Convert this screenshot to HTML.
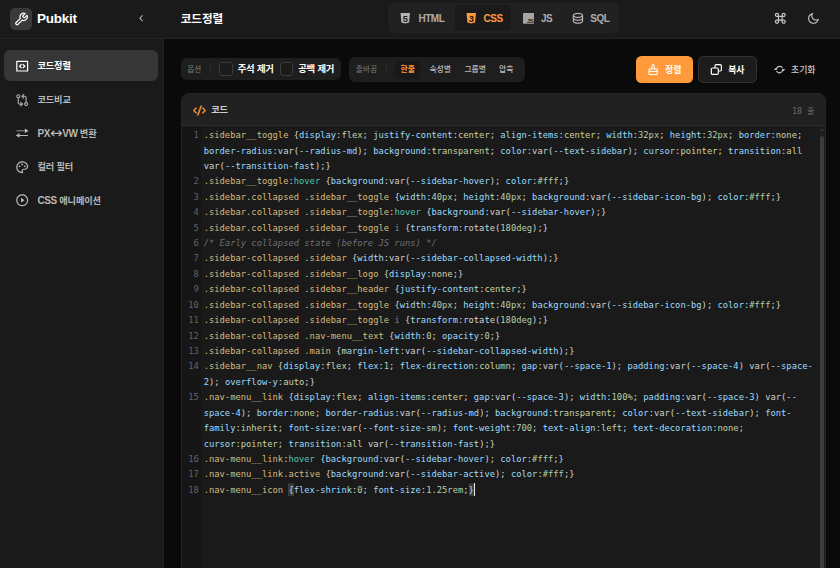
<!DOCTYPE html>
<html lang="ko">
<head>
<meta charset="utf-8">
<title>Pubkit - 코드정렬</title>
<style>
*{box-sizing:border-box;margin:0;padding:0}
html,body{width:840px;height:568px;overflow:hidden;background:#0a0a0a}
body{font-family:"Liberation Sans","Noto Sans CJK KR",sans-serif;color:#fff;position:relative;-webkit-font-smoothing:antialiased}
.abs{position:absolute}
/* sidebar */
.sidebar{position:absolute;left:0;top:0;width:164px;height:568px;background:#1a1a1a}
.sb-head{position:absolute;left:0;top:0;width:164px;height:39px;border-bottom:1px solid #242424}
.logo-box{position:absolute;left:10px;top:8px;width:22px;height:22px;border-radius:5px;background:#3a3a3a}
.logo-txt{position:absolute;left:37px;top:9px;font-size:13.5px;font-weight:700;line-height:20px;letter-spacing:-0.25px;color:#fff}
.collapse{position:absolute;left:136px;top:12px;width:12px;height:14px}
.nav{position:absolute;left:4px;width:154px;height:31px;border-radius:6px}
.nav.active{background:#363636}
.nav svg{position:absolute;left:10.8px;top:9px;width:14.4px;height:14.4px}
.nav span{position:absolute;left:33.5px;top:0;line-height:33px;font-size:9.2px;font-weight:700;color:#b8b8b8;letter-spacing:-0.15px;white-space:nowrap}
.nav.active span{color:#fff}
/* header */
.header{position:absolute;left:164px;top:0;width:676px;height:39px;background:#1a1a1a;border-bottom:1px solid #242424}
.title{position:absolute;left:16.7px;top:8.7px;font-size:11.6px;font-weight:700;line-height:20px;letter-spacing:-0.05px;color:#fff}
.tabs{position:absolute;left:224px;top:3px;width:231px;height:30px;border-radius:6px;background:#212121}
.tab{position:absolute;top:2px;height:26px;border-radius:4px;font-size:10px;font-weight:700;color:#adadad;line-height:27.6px;letter-spacing:-0.5px}
.tab.on{background:#1a1a1a;color:#ff9a3c}
.tab svg{position:absolute;top:7.5px;height:11px}
.tab span{position:absolute;top:0}
/* toolbar */
.grp{position:absolute;top:58.3px;height:21.4px;border-radius:6px;background:#1e1e1e}
.lbl{position:absolute;top:1.2px;line-height:21.4px;font-size:7.6px;color:#7a7a7a;letter-spacing:0;white-space:nowrap}
.vdiv{position:absolute;top:5px;width:1px;height:11.4px;background:#2a2a2a}
.cb{position:absolute;top:4.2px;width:13.5px;height:13.5px;border:1px solid #3c3c3c;border-radius:3px;background:#1a1a1a}
.cbl{position:absolute;top:0;line-height:21.4px;font-size:9.4px;font-weight:700;color:#fff;letter-spacing:-0.2px;white-space:nowrap}
.seg{position:absolute;top:4.2px;height:17.5px;line-height:18.6px;border-radius:4px;font-size:7.8px;font-weight:500;color:#bcbcbc;text-align:center;letter-spacing:0;white-space:nowrap}
.seg.on{background:#191919;color:#ff9a3c;font-weight:700}
.btn{position:absolute;top:56px;height:26.7px;border-radius:5.5px;font-size:8.9px;font-weight:700;letter-spacing:0;line-height:28.2px;white-space:nowrap}
.btn span{position:absolute;top:0}
.btn svg{position:absolute}
/* card */
.card{position:absolute;left:180.6px;top:93.4px;width:645.9px;height:500px;border-radius:8px;background:#1a1a1a;overflow:hidden;border:1px solid #252525}
.card-head{position:absolute;left:0;top:0;width:646px;height:31.7px;background:#212121;border-bottom:1px solid #2c2c2c}
.card-title{position:absolute;left:29.6px;top:0;line-height:33.4px;font-size:9.2px;font-weight:700;color:#d0d0d0;letter-spacing:-0.15px}
.count{position:absolute;right:13.2px;top:1.6px;line-height:30.4px;font-size:8px;color:#6a6a6a;white-space:nowrap}
.count b{font-family:"DejaVu Sans Mono","Liberation Mono",monospace;font-weight:400;font-size:8.4px}
.gutter{position:absolute;left:0;top:31.7px;width:19.2px;height:470px;background:#161616}
.code{position:absolute;left:0;top:33.7px;width:640px;font-family:"DejaVu Sans Mono","Liberation Mono",monospace;font-size:8.8px;line-height:15.43px;color:#d4d4d4}
.row{position:relative;height:15.43px;padding-left:22.1px;white-space:pre}
.row i.n{position:absolute;left:0;width:17.2px;text-align:right;font-style:normal;color:#636363}
.s{color:#d7ba7d}.p{color:#9cdcfe}.v{color:#c8d3a4}.n{color:#b5cea8}.t{color:#4ec9b0}.c{color:#6f6f6f;font-style:italic}.f{color:#d4d4d4}.e{color:#808080}
.sbar{position:absolute;left:637.6px;top:31.7px;width:8px;height:470px;background:#1d1d1d}
.thumb{position:absolute;left:1.2px;top:9.6px;width:3.7px;height:470px;background:#3b3b3b;border-radius:2px}
.sb-edge{position:absolute;left:163px;top:39px;width:1px;height:529px;background:#1f1f1f}
.ar{font-family:"DejaVu Sans",sans-serif;font-weight:400;font-size:15px;line-height:0;letter-spacing:-0.5px;position:relative;top:0.8px}
.l{font-size:10px;font-weight:700;letter-spacing:-0.4px}
.g2{top:57px;height:24.6px}
.g2 .lbl{line-height:24.6px}
.g2 .vdiv{top:6.6px}
.mb{background:#3c3c3c;box-shadow:0 -1.5px 0 #3c3c3c,0 1px 0 #3c3c3c}
.cur{display:inline-block;width:1px;height:12.6px;background:#e8e8e8;vertical-align:-3px;margin-left:0.3px}
.arr{position:absolute;left:1px;top:2.6px;width:0;height:0;border-left:2.1px solid transparent;border-right:2.1px solid transparent;border-bottom:2.6px solid #3a3a3a}
</style>
</head>
<body>
<div class="sidebar">
  <div class="sb-head">
    <div class="logo-box"></div><svg class="abs" style="left:13.75px;top:11.6px;width:14.5px;height:14.5px" viewBox="0 0 24 24" fill="none" stroke="#fff" stroke-width="2" stroke-linecap="round" stroke-linejoin="round"><path d="M14.7 6.3a1 1 0 0 0 0 1.4l1.6 1.6a1 1 0 0 0 1.4 0l3.77-3.77a6 6 0 0 1-7.94 7.94l-6.91 6.91a2.12 2.12 0 0 1-3-3l6.91-6.91a6 6 0 0 1 7.94-7.94l-3.76 3.76z"/></svg>
    <div class="logo-txt">Pubkit</div>
    <svg class="abs" style="left:135.2px;top:12.2px;width:12.3px;height:12.3px" viewBox="0 0 24 24" fill="#b4b4b4"><path d="M10.8284 12.0007L15.7782 16.9504L14.364 18.3646L8 12.0007L14.364 5.63672L15.7782 7.05093L10.8284 12.0007Z"/></svg>
  </div>
  <div class="sb-edge"></div>
  <div class="nav active" style="top:50px"><svg viewBox="0 0 24 24" fill="#fff"><path d="M3 3H21C21.5523 3 22 3.44772 22 4V20C22 20.5523 21.5523 21 21 21H3C2.44772 21 2 20.5523 2 20V4C2 3.44772 2.44772 3 3 3ZM4 5V19H20V5H4ZM6.2 12L10.2 8L11.700 9.500L9.200 12L11.700 14.500L10.2 16ZM17.800 12L13.800 8L12.300 9.500L14.800 12L12.300 14.500L13.800 16Z"/></svg><span>코드정렬</span></div>
  <div class="nav" style="top:83.5px"><svg viewBox="0 0 24 24" fill="none" stroke="#b0b0b0" stroke-width="1.8" stroke-linecap="round" stroke-linejoin="round"><circle cx="5.5" cy="5.5" r="2.5"/><circle cx="18.5" cy="18.5" r="2.5"/><path d="M12 5.5h4.5a2 2 0 0 1 2 2V16"/><path d="M14.5 8.5l-3-3 3-3"/><path d="M12 18.5H7.500a2 2 0 0 1-2-2V8"/><path d="M9.5 15.500l3 3-3 3"/></svg><span>코드비교</span></div>
  <div class="nav" style="top:117px"><svg viewBox="0 0 24 24" fill="#b8b8b8"><path d="M2.500 7.300H16.500V4L22.600 8.100L16.500 12.200V8.900H2.500ZM21.500 14.900H7.500V11.600L1.400 15.700L7.500 19.800V16.500H21.500Z"/></svg><span><b class="l">PX<b class="ar">↔</b>VW</b> 변환</span></div>
  <div class="nav" style="top:150.5px"><svg viewBox="0 0 24 24" fill="#b8b8b8"><path d="M12 2C17.5222 2 22 5.97778 22 10.8889C22 13.9556 19.5111 16.4444 16.4444 16.4444H14.4778C13.5556 16.4444 12.8111 17.1889 12.8111 18.1111C12.8111 18.5333 12.9778 18.9222 13.2333 19.2111C13.5 19.5111 13.6667 19.9 13.6667 20.3333C13.6667 21.2556 12.9 22 12 22C6.47778 22 2 17.5222 2 12C2 6.47778 6.47778 2 12 2ZM10.8111 18.1111C10.8111 16.0843 12.451 14.4444 14.4778 14.4444H16.4444C18.4065 14.4444 20 12.851 20 10.8889C20 7.1392 16.4677 4 12 4C7.58235 4 4 7.58235 4 12C4 16.19 7.2226 19.6285 11.324 19.9718C10.9948 19.4168 10.8111 18.7761 10.8111 18.1111ZM7.5 12C6.67157 12 6 11.3284 6 10.5C6 9.67157 6.67157 9 7.5 9C8.32843 9 9 9.67157 9 10.5C9 11.3284 8.32843 12 7.5 12ZM16.5 12C15.6716 12 15 11.3284 15 10.5C15 9.67157 15.6716 9 16.5 9C17.3284 9 18 9.67157 18 10.5C18 11.3284 17.3284 12 16.5 12ZM12 9C11.1716 9 10.5 8.32843 10.5 7.5C10.5 6.67157 11.1716 6 12 6C12.8284 6 13.5 6.67157 13.5 7.5C13.5 8.32843 12.8284 9 12 9Z"/></svg><span>컬러 필터</span></div>
  <div class="nav" style="top:184px"><svg viewBox="0 0 24 24" fill="#b8b8b8"><path d="M12 22C6.47715 22 2 17.5228 2 12C2 6.47715 6.47715 2 12 2C17.5228 2 22 6.47715 22 12C22 17.5228 17.5228 22 12 22ZM12 20C16.4183 20 20 16.4183 20 12C20 7.58172 16.4183 4 12 4C7.58172 4 4 7.58172 4 12C4 16.4183 7.58172 20 12 20ZM10.6219 8.41459L15.5008 11.6672C15.6846 11.7897 15.7343 12.0381 15.6117 12.2219C15.5824 12.2658 15.5447 12.3035 15.5008 12.3328L10.6219 15.5854C10.4381 15.708 10.1897 15.6583 10.0672 15.4745C10.0234 15.4088 10 15.3316 10 15.2526V8.74741C10 8.52649 10.1791 8.34741 10.4 8.34741C10.479 8.34741 10.5562 8.37078 10.6219 8.41459Z"/></svg><span><b class="l">CSS</b> 애니메이션</span></div>
</div>
<div class="header">
  <div class="title">코드정렬</div>
  <div class="tabs">
    <div class="tab" style="left:3px;width:64px"><svg class="abs" style="left:8.4px;top:7.1px;width:12.5px;height:12.5px" viewBox="0 0 24 24"><path fill="#b4b4b4" d="M3 2H21L19.3773 20L12 22L4.62268 20L3 2Z"/><text x="12" y="18.6" text-anchor="middle" font-family="Liberation Sans, sans-serif" font-weight="700" font-size="18" fill="#212121">5</text></svg><span style="left:27.5px">HTML</span></div>
    <div class="tab on" style="left:67px;width:56px"><svg class="abs" style="left:9.8px;top:7.1px;width:12.5px;height:12.5px" viewBox="0 0 24 24"><path fill="#ff9a3c" d="M3 2H21L19.3773 20L12 22L4.62268 20L3 2Z"/><text x="12" y="18.6" text-anchor="middle" font-family="Liberation Sans, sans-serif" font-weight="700" font-size="18" fill="#1a1a1a">3</text></svg><span style="left:28.5px">CSS</span></div>
    <div class="tab" style="left:123px;width:50px"><svg class="abs" style="left:11.7px;top:8.3px;width:11.3px;height:10.7px" viewBox="0 0 11.3 10.7"><rect width="11.3" height="10.7" rx="0.8" fill="#a6a6a6"/><text x="10.3" y="9.6" text-anchor="end" font-family="Liberation Sans, sans-serif" font-weight="700" font-size="6.2" fill="#222">JS</text></svg><span style="left:30px">JS</span></div>
    <div class="tab" style="left:173px;width:55px"><svg class="abs" style="left:10px;top:5.9px;width:13.9px;height:13.9px" viewBox="0 0 24 24" fill="#b4b4b4"><path d="M5 12.5C5 12.8134 5.46101 13.3584 6.53047 13.8931C7.91405 14.5849 9.87677 15 12 15C14.1232 15 16.0859 14.5849 17.4695 13.8931C18.539 13.3584 19 12.8134 19 12.5V10.3287C17.35 11.3482 14.8273 12 12 12C9.17273 12 6.64996 11.3482 5 10.3287V12.5ZM19 15.3287C17.35 16.3482 14.8273 17 12 17C9.17273 17 6.64996 16.3482 5 15.3287V17.5C5 17.8134 5.46101 18.3584 6.53047 18.8931C7.91405 19.5849 9.87677 20 12 20C14.1232 20 16.0859 19.5849 17.4695 18.8931C18.539 18.3584 19 17.8134 19 17.5V15.3287ZM3 17.5V7.5C3 5.01472 7.02944 3 12 3C16.9706 3 21 5.01472 21 7.5V17.5C21 19.9853 16.9706 22 12 22C7.02944 22 3 19.9853 3 17.5ZM12 10C14.1232 10 16.0859 9.58492 17.4695 8.89313C18.539 8.3584 19 7.81342 19 7.5C19 7.18658 18.539 6.6416 17.4695 6.10687C16.0859 5.41508 14.1232 5 12 5C9.87677 5 7.91405 5.41508 6.53047 6.10687C5.46101 6.6416 5 7.18658 5 7.5C5 7.81342 5.46101 8.3584 6.53047 8.89313C7.91405 9.58492 9.87677 10 12 10Z"/></svg><span style="left:29.3px">SQL</span></div>
  </div>
  <svg class="abs" style="left:608.85px;top:11.15px;width:14.6px;height:14.6px" viewBox="0 0 24 24" fill="#c4c4c4"><path d="M10 8H14V6.5C14 4.567 15.567 3 17.5 3C19.433 3 21 4.567 21 6.5C21 8.433 19.433 10 17.5 10H16V14H17.5C19.433 14 21 15.567 21 17.5C21 19.433 19.433 21 17.5 21C15.567 21 14 19.433 14 17.5V16H10V17.5C10 19.433 8.433 21 6.5 21C4.567 21 3 19.433 3 17.5C3 15.567 4.567 14 6.5 14H8V10H6.5C4.567 10 3 8.433 3 6.5C3 4.567 4.567 3 6.5 3C8.433 3 10 4.567 10 6.5V8ZM8 8V6.5C8 5.67157 7.32843 5 6.5 5C5.67157 5 5 5.67157 5 6.5C5 7.32843 5.67157 8 6.5 8H8ZM8 16H6.5C5.67157 16 5 16.6716 5 17.5C5 18.3284 5.67157 19 6.5 19C7.32843 19 8 18.3284 8 17.5V16ZM16 8H17.5C18.3284 8 19 7.32843 19 6.5C19 5.67157 18.3284 5 17.5 5C16.6716 5 16 5.67157 16 6.5V8ZM16 16V17.5C16 18.3284 16.6716 19 17.5 19C18.3284 19 19 18.3284 19 17.5C19 16.6716 18.3284 16 17.5 16H16ZM10 10V14H14V10H10Z"/></svg>
  <svg class="abs" style="left:642.8px;top:12px;width:12.9px;height:12.9px" viewBox="0 0 24 24" fill="#c4c4c4"><path d="M10 7C10 10.866 13.134 14 17 14C18.9584 14 20.729 13.1957 21.9995 11.8995C22 11.933 22 11.9665 22 12C22 17.5228 17.5228 22 12 22C6.47715 22 2 17.5228 2 12C2 6.47715 6.47715 2 12 2C12.0335 2 12.067 2 12.1005 2.00049C10.8043 3.27098 10 5.04157 10 7ZM4 12C4 16.4183 7.58172 20 12 20C15.0583 20 17.7158 18.2839 19.062 15.7621C18.3945 15.9187 17.7035 16 17 16C12.0294 16 8 11.9706 8 7C8 6.29648 8.08133 5.60547 8.2379 4.938C5.71611 6.28423 4 8.9417 4 12Z"/></svg>
</div>
<div class="grp" style="left:180.7px;width:160.2px">
  <div class="lbl" style="left:6.5px">옵션</div>
  <div class="vdiv" style="left:29.5px"></div>
  <div class="cb" style="left:38.5px"></div>
  <div class="cbl" style="left:57px">주석 제거</div>
  <div class="cb" style="left:99px"></div>
  <div class="cbl" style="left:117.5px">공백 제거</div>
</div>
<div class="grp g2" style="left:349.2px;width:175.8px">
  <div class="lbl" style="left:6.5px;letter-spacing:0.3px">줄바꿈</div>
  <div class="vdiv" style="left:37px"></div>
  <div class="seg on" style="left:46px;width:25px">한줄</div>
  <div class="seg" style="left:76px;width:30px">속성별</div>
  <div class="seg" style="left:111px;width:30px">그룹별</div>
  <div class="seg" style="left:145px;width:24px">압축</div>
</div>
<div class="btn" style="left:636.2px;width:56.5px;background:#ff9a3c;color:#fff"><svg class="abs" style="left:11px;top:6.6px;width:12px;height:13px" viewBox="0 0 12 13" fill="none" stroke="#fff" stroke-width="1.1" stroke-linejoin="round"><path d="M4.500 6L5.400 2Q6.100 0.900 6.800 2L7.700 6"/><rect x="2" y="6" width="8.300" height="5.500" rx="0.5"/><path d="M2 8.500H10.300"/></svg><span style="left:28.8px">정렬</span></div>
<div class="btn" style="left:697.8px;width:58.9px;background:#1c1c1c;border:1px solid #333;color:#fff"><svg class="abs" style="left:11.6px;top:6.2px;width:14px;height:14px" viewBox="0 0 14 14" fill="none" stroke="#fff" stroke-width="1.2"><rect x="5" y="1.600" width="6.400" height="6.400" rx="1.200"/><rect x="1.300" y="5" width="7" height="6.400" rx="1.200" fill="#1c1c1c"/></svg><span style="left:29.4px;top:-1px">복사</span></div>
<div class="btn" style="left:764px;width:60px;color:#c8c8c8;font-weight:500"><svg class="abs" style="left:9px;top:8px;width:13px;height:12px" viewBox="0 0 13 12" fill="none" stroke="#c8c8c8" stroke-width="1.15"><path d="M3.300 5.200A3.300 3.300 0 0 1 9.500 4.100M9.700 6A3.300 3.300 0 0 1 3.500 7.100"/><path d="M0.800 6.100H4.300L2.600 3.900ZM8.700 5.100H12.200L10.400 7.300Z" fill="#c8c8c8" stroke="none"/></svg><span style="left:27px">초기화</span></div>
<div class="card">
  <div class="card-head">
    <svg class="abs" style="left:11.1px;top:9.3px;width:13px;height:13px" viewBox="0 0 24 24" fill="#ff9a3c" stroke="#ff9a3c" stroke-width="0.7"><path d="M24 12L18.3431 17.6569L16.9289 16.2426L21.1716 12L16.9289 7.75736L18.3431 6.34315L24 12ZM2.82843 12L7.07107 16.2426L5.65685 17.6569L0 12L5.65685 6.34315L7.07107 7.75736L2.82843 12ZM9.78845 21H7.66009L14.2116 3H16.3399L9.78845 21Z"/></svg><div class="card-title">코드</div>
    <div class="count"><b>18</b><span style="margin-left:5px">줄</span></div>
  </div>
  <div class="gutter"></div>
  <div class="code" id="code">
<div class="row"><i class="n">1</i><span class="s">.sidebar__toggle</span> <span class="f">{</span><span class="p">display</span><span class="f">:</span><span class="v">flex</span><span class="f">;</span> <span class="p">justify-content</span><span class="f">:</span><span class="v">center</span><span class="f">;</span> <span class="p">align-items</span><span class="f">:</span><span class="v">center</span><span class="f">;</span> <span class="p">width</span><span class="f">:</span><span class="n">32px</span><span class="f">;</span> <span class="p">height</span><span class="f">:</span><span class="n">32px</span><span class="f">;</span> <span class="p">border</span><span class="f">:</span><span class="v">none</span><span class="f">;</span> </div>
<div class="row"><span class="p">border-radius</span><span class="f">:</span><span class="f">var</span><span class="f">(</span><span class="p">--radius-md</span><span class="f">)</span><span class="f">;</span> <span class="p">background</span><span class="f">:</span><span class="v">transparent</span><span class="f">;</span> <span class="p">color</span><span class="f">:</span><span class="f">var</span><span class="f">(</span><span class="p">--text-sidebar</span><span class="f">)</span><span class="f">;</span> <span class="p">cursor</span><span class="f">:</span><span class="v">pointer</span><span class="f">;</span> <span class="p">transition</span><span class="f">:</span><span class="v">all</span> </div>
<div class="row"><span class="f">var</span><span class="f">(</span><span class="p">--transition-fast</span><span class="f">)</span><span class="f">;</span><span class="f">}</span></div>
<div class="row"><i class="n">2</i><span class="s">.sidebar__toggle</span><span class="f">:</span><span class="t">hover</span> <span class="f">{</span><span class="p">background</span><span class="f">:</span><span class="f">var</span><span class="f">(</span><span class="p">--sidebar-hover</span><span class="f">)</span><span class="f">;</span> <span class="p">color</span><span class="f">:</span><span class="n">#fff</span><span class="f">;</span><span class="f">}</span></div>
<div class="row"><i class="n">3</i><span class="s">.sidebar</span><span class="s">.collapsed</span> <span class="s">.sidebar__toggle</span> <span class="f">{</span><span class="p">width</span><span class="f">:</span><span class="n">40px</span><span class="f">;</span> <span class="p">height</span><span class="f">:</span><span class="n">40px</span><span class="f">;</span> <span class="p">background</span><span class="f">:</span><span class="f">var</span><span class="f">(</span><span class="p">--sidebar-icon-bg</span><span class="f">)</span><span class="f">;</span> <span class="p">color</span><span class="f">:</span><span class="n">#fff</span><span class="f">;</span><span class="f">}</span></div>
<div class="row"><i class="n">4</i><span class="s">.sidebar</span><span class="s">.collapsed</span> <span class="s">.sidebar__toggle</span><span class="f">:</span><span class="t">hover</span> <span class="f">{</span><span class="p">background</span><span class="f">:</span><span class="f">var</span><span class="f">(</span><span class="p">--sidebar-hover</span><span class="f">)</span><span class="f">;</span><span class="f">}</span></div>
<div class="row"><i class="n">5</i><span class="s">.sidebar</span><span class="s">.collapsed</span> <span class="s">.sidebar__toggle</span> <span class="e">i</span> <span class="f">{</span><span class="p">transform</span><span class="f">:</span><span class="f">rotate</span><span class="f">(</span><span class="n">180deg</span><span class="f">)</span><span class="f">;</span><span class="f">}</span></div>
<div class="row"><i class="n">6</i><span class="c">/* Early collapsed state (before JS runs) */</span></div>
<div class="row"><i class="n">7</i><span class="s">.sidebar-collapsed</span> <span class="s">.sidebar</span> <span class="f">{</span><span class="p">width</span><span class="f">:</span><span class="f">var</span><span class="f">(</span><span class="p">--sidebar-collapsed-width</span><span class="f">)</span><span class="f">;</span><span class="f">}</span></div>
<div class="row"><i class="n">8</i><span class="s">.sidebar-collapsed</span> <span class="s">.sidebar__logo</span> <span class="f">{</span><span class="p">display</span><span class="f">:</span><span class="v">none</span><span class="f">;</span><span class="f">}</span></div>
<div class="row"><i class="n">9</i><span class="s">.sidebar-collapsed</span> <span class="s">.sidebar__header</span> <span class="f">{</span><span class="p">justify-content</span><span class="f">:</span><span class="v">center</span><span class="f">;</span><span class="f">}</span></div>
<div class="row"><i class="n">10</i><span class="s">.sidebar-collapsed</span> <span class="s">.sidebar__toggle</span> <span class="f">{</span><span class="p">width</span><span class="f">:</span><span class="n">40px</span><span class="f">;</span> <span class="p">height</span><span class="f">:</span><span class="n">40px</span><span class="f">;</span> <span class="p">background</span><span class="f">:</span><span class="f">var</span><span class="f">(</span><span class="p">--sidebar-icon-bg</span><span class="f">)</span><span class="f">;</span> <span class="p">color</span><span class="f">:</span><span class="n">#fff</span><span class="f">;</span><span class="f">}</span></div>
<div class="row"><i class="n">11</i><span class="s">.sidebar-collapsed</span> <span class="s">.sidebar__toggle</span> <span class="e">i</span> <span class="f">{</span><span class="p">transform</span><span class="f">:</span><span class="f">rotate</span><span class="f">(</span><span class="n">180deg</span><span class="f">)</span><span class="f">;</span><span class="f">}</span></div>
<div class="row"><i class="n">12</i><span class="s">.sidebar-collapsed</span> <span class="s">.nav-menu__text</span> <span class="f">{</span><span class="p">width</span><span class="f">:</span><span class="n">0</span><span class="f">;</span> <span class="p">opacity</span><span class="f">:</span><span class="n">0</span><span class="f">;</span><span class="f">}</span></div>
<div class="row"><i class="n">13</i><span class="s">.sidebar-collapsed</span> <span class="s">.main</span> <span class="f">{</span><span class="p">margin-left</span><span class="f">:</span><span class="f">var</span><span class="f">(</span><span class="p">--sidebar-collapsed-width</span><span class="f">)</span><span class="f">;</span><span class="f">}</span></div>
<div class="row"><i class="n">14</i><span class="s">.sidebar__nav</span> <span class="f">{</span><span class="p">display</span><span class="f">:</span><span class="v">flex</span><span class="f">;</span> <span class="p">flex</span><span class="f">:</span><span class="n">1</span><span class="f">;</span> <span class="p">flex-direction</span><span class="f">:</span><span class="v">column</span><span class="f">;</span> <span class="p">gap</span><span class="f">:</span><span class="f">var</span><span class="f">(</span><span class="p">--space-1</span><span class="f">)</span><span class="f">;</span> <span class="p">padding</span><span class="f">:</span><span class="f">var</span><span class="f">(</span><span class="p">--space-4</span><span class="f">)</span> <span class="f">var</span><span class="f">(</span><span class="p">--space-</span></div>
<div class="row"><span class="p">2</span><span class="f">)</span><span class="f">;</span> <span class="p">overflow-y</span><span class="f">:</span><span class="v">auto</span><span class="f">;</span><span class="f">}</span></div>
<div class="row"><i class="n">15</i><span class="s">.nav-menu__link</span> <span class="f">{</span><span class="p">display</span><span class="f">:</span><span class="v">flex</span><span class="f">;</span> <span class="p">align-items</span><span class="f">:</span><span class="v">center</span><span class="f">;</span> <span class="p">gap</span><span class="f">:</span><span class="f">var</span><span class="f">(</span><span class="p">--space-3</span><span class="f">)</span><span class="f">;</span> <span class="p">width</span><span class="f">:</span><span class="n">100%</span><span class="f">;</span> <span class="p">padding</span><span class="f">:</span><span class="f">var</span><span class="f">(</span><span class="p">--space-3</span><span class="f">)</span> <span class="f">var</span><span class="f">(</span><span class="p">--</span></div>
<div class="row"><span class="p">space-4</span><span class="f">)</span><span class="f">;</span> <span class="p">border</span><span class="f">:</span><span class="v">none</span><span class="f">;</span> <span class="p">border-radius</span><span class="f">:</span><span class="f">var</span><span class="f">(</span><span class="p">--radius-md</span><span class="f">)</span><span class="f">;</span> <span class="p">background</span><span class="f">:</span><span class="v">transparent</span><span class="f">;</span> <span class="p">color</span><span class="f">:</span><span class="f">var</span><span class="f">(</span><span class="p">--text-sidebar</span><span class="f">)</span><span class="f">;</span> <span class="p">font-</span></div>
<div class="row"><span class="p">family</span><span class="f">:</span><span class="v">inherit</span><span class="f">;</span> <span class="p">font-size</span><span class="f">:</span><span class="f">var</span><span class="f">(</span><span class="p">--font-size-sm</span><span class="f">)</span><span class="f">;</span> <span class="p">font-weight</span><span class="f">:</span><span class="n">700</span><span class="f">;</span> <span class="p">text-align</span><span class="f">:</span><span class="v">left</span><span class="f">;</span> <span class="p">text-decoration</span><span class="f">:</span><span class="v">none</span><span class="f">;</span> </div>
<div class="row"><span class="p">cursor</span><span class="f">:</span><span class="v">pointer</span><span class="f">;</span> <span class="p">transition</span><span class="f">:</span><span class="v">all</span> <span class="f">var</span><span class="f">(</span><span class="p">--transition-fast</span><span class="f">)</span><span class="f">;</span><span class="f">}</span></div>
<div class="row"><i class="n">16</i><span class="s">.nav-menu__link</span><span class="f">:</span><span class="t">hover</span> <span class="f">{</span><span class="p">background</span><span class="f">:</span><span class="f">var</span><span class="f">(</span><span class="p">--sidebar-hover</span><span class="f">)</span><span class="f">;</span> <span class="p">color</span><span class="f">:</span><span class="n">#fff</span><span class="f">;</span><span class="f">}</span></div>
<div class="row"><i class="n">17</i><span class="s">.nav-menu__link</span><span class="s">.active</span> <span class="f">{</span><span class="p">background</span><span class="f">:</span><span class="f">var</span><span class="f">(</span><span class="p">--sidebar-active</span><span class="f">)</span><span class="f">;</span> <span class="p">color</span><span class="f">:</span><span class="n">#fff</span><span class="f">;</span><span class="f">}</span></div>
<div class="row"><i class="n">18</i><span class="s">.nav-menu__icon</span> <span class="f mb">{</span><span class="p">flex-shrink</span><span class="f">:</span><span class="n">0</span><span class="f">;</span> <span class="p">font-size</span><span class="f">:</span><span class="n">1.25rem</span><span class="f">;</span><span class="f mb">}</span><span class="cur"></span></div>
</div>
  <div class="sbar"><div class="arr"></div><div class="thumb"></div></div>
</div>
</body>
</html>
